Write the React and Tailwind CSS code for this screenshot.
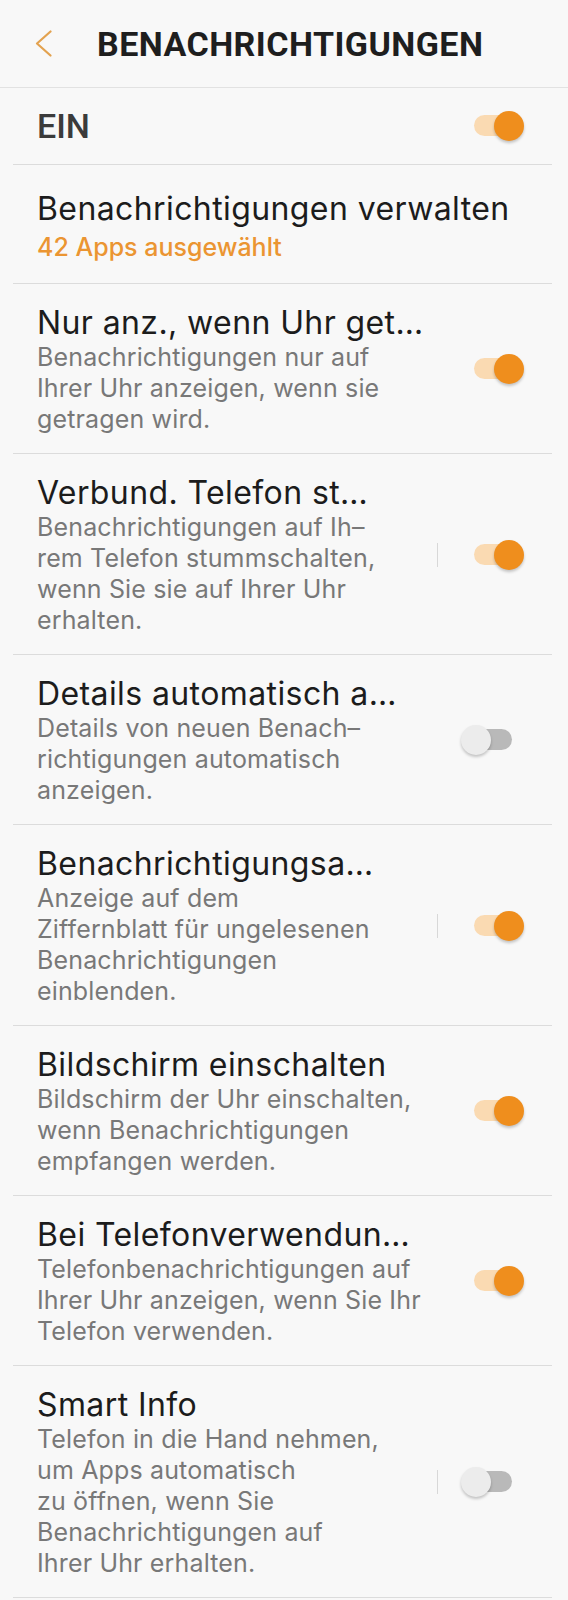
import React from "react";

function Toggle({ on }) {
  return (
    <div className="relative w-[64px] h-[32px] shrink-0">
      <div
        className={
          on
            ? "absolute left-[13px] top-[5px] w-[38px] h-[21px] rounded-full bg-[#fadab2]"
            : "absolute left-[13px] top-[5px] w-[38px] h-[21px] rounded-full bg-[#b9b9b9]"
        }
      />
      <div
        className={
          on
            ? "absolute top-[1px] right-[1px] w-[30px] h-[30px] rounded-full bg-[#ef8e1d] shadow-[0_2px_3px_rgba(0,0,0,0.22)]"
            : "absolute top-[1px] left-0 w-[30px] h-[30px] rounded-full bg-[#ececec] shadow-[0_2px_3px_rgba(0,0,0,0.22)]"
        }
      />
    </div>
  );
}

const rows = [
  {
    title: "Nur anz., wenn Uhr get…",
    desc: ["Benachrichtigungen nur auf", "Ihrer Uhr anzeigen, wenn sie", "getragen wird."],
    on: true,
    sep: false,
  },
  {
    title: "Verbund. Telefon st…",
    desc: ["Benachrichtigungen auf Ih–", "rem Telefon stummschalten,", "wenn Sie sie auf Ihrer Uhr", "erhalten."],
    on: true,
    sep: true,
  },
  {
    title: "Details automatisch a…",
    desc: ["Details von neuen Benach–", "richtigungen automatisch", "anzeigen."],
    on: false,
    sep: false,
  },
  {
    title: "Benachrichtigungsa…",
    desc: ["Anzeige auf dem", "Ziffernblatt für ungelesenen", "Benachrichtigungen", "einblenden."],
    on: true,
    sep: true,
  },
  {
    title: "Bildschirm einschalten",
    desc: ["Bildschirm der Uhr einschalten,", "wenn Benachrichtigungen", "empfangen werden."],
    on: true,
    sep: false,
  },
  {
    title: "Bei Telefonverwendun…",
    desc: ["Telefonbenachrichtigungen auf", "Ihrer Uhr anzeigen, wenn Sie Ihr", "Telefon verwenden."],
    on: true,
    sep: false,
  },
  {
    title: "Smart Info",
    desc: [
      "Telefon in die Hand nehmen,",
      "um Apps automatisch",
      "zu öffnen, wenn Sie",
      "Benachrichtigungen auf",
      "Ihrer Uhr erhalten.",
    ],
    on: false,
    sep: true,
  },
];

export default function App() {
  return (
    <div className="w-[568px] min-h-[1600px] bg-[#f8f8f8] font-['Inter',sans-serif]">
      {/* Header */}
      <div className="h-[88px] flex items-center border-b border-[#e2e2e2]">
        <div className="w-[97px] pl-[35px] flex items-center">
          <svg width="17" height="27" viewBox="0 0 17 27" fill="none">
            <polyline points="15.5,1.5 2,13.5 15.5,25.5" stroke="#e3a24f" strokeWidth="2.2" strokeLinecap="round" strokeLinejoin="round" />
          </svg>
        </div>
        <div className="font-['Roboto',sans-serif] text-[34px] font-bold text-[#1e1e1e] tracking-[0.45px] leading-none whitespace-nowrap">
          BENACHRICHTIGUNGEN
        </div>
      </div>

      {/* EIN row */}
      <div className="ml-[13px] mr-[16px] h-[77px] flex items-center border-b border-[#dcdcdc] pl-[24px] pr-[27px]">
        <div className="flex-1 font-['Roboto',sans-serif] text-[34px] font-medium text-[#3b3b3b] leading-none">EIN</div>
        <Toggle on={true} />
      </div>

      {/* Manage row */}
      <div className="ml-[13px] mr-[16px] border-b border-[#dcdcdc] pl-[24px] pr-[27px] pt-[24px] pb-[20px]">
        <div className="text-[32px] leading-[39px] tracking-[0.4px] text-[#1c1c1c] whitespace-nowrap">
          Benachrichtigungen verwalten
        </div>
        <div className="mt-[4px] text-[25px] leading-[31px] font-medium text-[#eb9532] whitespace-nowrap">
          42 Apps ausgewählt
        </div>
      </div>

      {rows.map((r, i) => (
        <div
          key={i}
          className="ml-[13px] mr-[16px] border-b border-[#dcdcdc] pl-[24px] pr-[27px] pt-[19px] pb-[18px] flex items-center"
        >
          <div className="flex-1 min-w-0">
            <div className="text-[32px] leading-[39px] tracking-[0.4px] text-[#1c1c1c] whitespace-nowrap">{r.title}</div>
            <div className="text-[25px] leading-[31px] tracking-[0.15px] text-[#787878] whitespace-nowrap">
              {r.desc.map((d, j) => (
                <div key={j}>{d}</div>
              ))}
            </div>
          </div>
          <div className="flex items-center shrink-0">
            {r.sep ? (
              <div className="w-px h-[24px] bg-[#d8d8d8] mr-[23px]" />
            ) : (
              <div className="w-px h-[24px] mr-[23px]" />
            )}
            <Toggle on={r.on} />
          </div>
        </div>
      ))}
    </div>
  );
}
